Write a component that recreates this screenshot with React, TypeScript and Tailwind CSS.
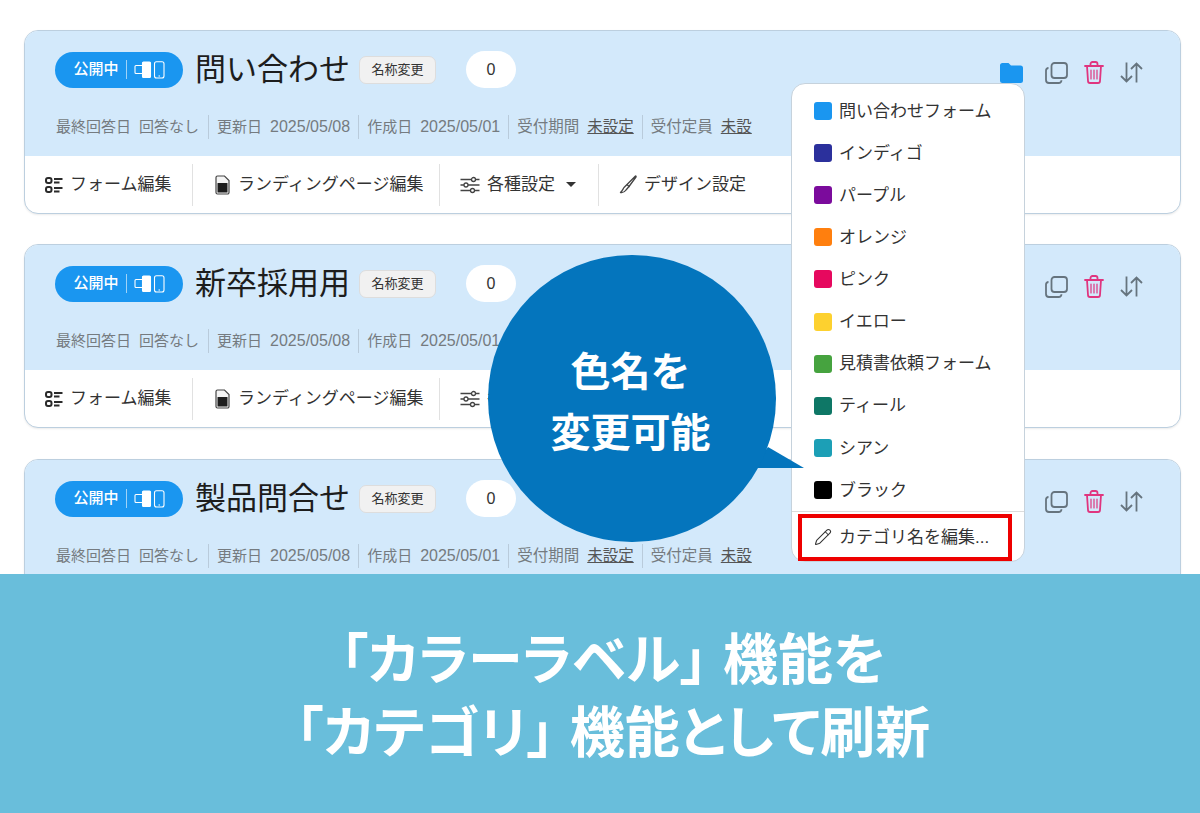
import { Pencil } from "lucide-react";

const categories = [
  { name: "問い合わせフォーム", color: "bg-[#1a96f0]" },
  { name: "インディゴ", color: "bg-[#2b309c]" },
  { name: "パープル", color: "bg-[#7b0b9c]" },
  { name: "オレンジ", color: "bg-[#ff7f0e]" },
  { name: "ピンク", color: "bg-[#e6085e]" },
  { name: "イエロー", color: "bg-[#fdd12f]" },
  { name: "見積書依頼フォーム", color: "bg-[#46a33f]" },
  { name: "ティール", color: "bg-[#0e7766]" },
  { name: "シアン", color: "bg-[#1c9fb6]" },
  { name: "ブラック", color: "bg-black" },
];

const DeviceIcon = () => (
  <svg width="31" height="18" viewBox="0 0 31 18" fill="none" stroke="currentColor" strokeWidth="1.1">
    <path d="M8 4.500H2a1 1 0 0 0-1 1v6a1 1 0 0 0 1 1h6" />
    <rect x="8.500" y="1" width="8" height="15.500" rx="1" fill="currentColor" />
    <rect x="20.500" y="0.800" width="9.500" height="16.200" rx="2" />
    <path d="M24.500 15h1.500" />
  </svg>
);

const FormIcon = () => (
  <svg width="18" height="18" viewBox="0 0 18 18" fill="none" stroke="#2b2b2b" strokeWidth="2">
    <rect x="1" y="2" width="5.500" height="5" rx="2" />
    <rect x="1" y="11" width="5.500" height="5" rx="2" />
    <path d="M9 3h8.500M9 6.500h5.500M9 12h8.500M9 15.500h5.500" />
  </svg>
);

const PageIcon = () => (
  <svg width="16" height="20" viewBox="0 0 16 20">
    <path d="M2.500 1h7l4.500 4.500V17.500a1.500 1.500 0 0 1-1.500 1.500H2.500A1.500 1.500 0 0 1 1 17.500V2.500A1.500 1.500 0 0 1 2.500 1z" fill="#f4f4f4" stroke="#444" strokeWidth="1.200" />
    <rect x="2.500" y="8" width="10" height="9.500" rx="0.500" fill="#1d1d1d" />
  </svg>
);

const SlidersIcon = () => (
  <svg width="20" height="18" viewBox="0 0 20 18" fill="none" stroke="#444" strokeWidth="1.300">
    <path d="M0.500 3.500h11M15.500 3.500h4M0.500 9h3.500M8 9h11.500M0.500 14.500h10M14.500 14.500h5" />
    <circle cx="13.500" cy="3.500" r="2" />
    <circle cx="6" cy="9" r="2" />
    <circle cx="12.500" cy="14.500" r="2" />
  </svg>
);

const BrushIcon = () => (
  <svg width="18" height="19" viewBox="0 0 18 19" fill="none" stroke="#444" strokeWidth="1.300" strokeLinejoin="round">
    <path d="M16.500 1 8 9.500 5 12.500c-1 1.500-1.500 3-3.500 5 3 .5 4.500-1 5.500-2.500l3-3.500 7-9.500c.3-.8-.2-1.200-.5-1z" />
    <path d="M8 9.500 10.500 12" />
  </svg>
);

const FolderIcon = () => (
  <svg width="23" height="20" viewBox="0 0 23 20" fill="#1a96f0">
    <path d="M2.500 0h6l2.500 2.500h9.500A2.500 2.500 0 0 1 23 5v12.500a2.500 2.500 0 0 1-2.500 2.500h-18A2.500 2.500 0 0 1 0 17.500v-15A2.500 2.500 0 0 1 2.500 0z" />
  </svg>
);

const CopyIcon = () => (
  <svg width="23" height="22" viewBox="0 0 23 22" fill="none" stroke="#66747e" strokeWidth="1.800">
    <rect x="6.500" y="1" width="15.500" height="15" rx="3" />
    <path d="M3.500 6A2.500 2.500 0 0 0 1 8.500V18a3 3 0 0 0 3 3h9.500a3 3 0 0 0 3-2.800" />
  </svg>
);

const TrashIcon = () => (
  <svg width="20" height="23" viewBox="0 0 20 23" fill="none" stroke="#e0357f" strokeWidth="1.800" strokeLinecap="round">
    <path d="M1 5h18M6.500 5V3a2 2 0 0 1 2-2h3a2 2 0 0 1 2 2v2M3 5l1 15a2 2 0 0 0 2 2h8a2 2 0 0 0 2-2l1-15" />
    <path d="M7 9v9M10 9v9M13 9v9" strokeWidth="1.200" />
  </svg>
);

const SortIcon = () => (
  <svg width="23" height="21" viewBox="0 0 23 21" fill="none" stroke="#66747e" strokeWidth="1.800">
    <path d="M6.500 0.500v19M1 14l5.500 5.500L12 14M16.500 20.500v-19M11 7l5.500-5.500L22 7" />
  </svg>
);

const Meta = ({ label, value, link, first }: { label: string; value: string; link?: boolean; first?: boolean }) => (
  <div className={first ? "flex items-center gap-[8px] pr-[9px] h-[24px]" : "flex items-center gap-[8px] px-[8px] h-[24px] border-l border-[#b9cbdb]"}>
    <span className={link ? "text-[15.500px]" : ""}>{label}</span>
    <span className={link ? "text-[15.500px] underline text-[#555]" : first ? "" : "text-[16px]"}>{value}</span>
  </div>
);

const tools = [
  { label: "フォーム編集", width: "w-[148px]", icon: <FormIcon /> },
  { label: "ランディングページ編集", width: "w-[247px] pl-[22px]", icon: <PageIcon /> },
  { label: "各種設定", width: "w-[159px] pl-[20px]", icon: <SlidersIcon />, caret: true },
  { label: "デザイン設定", width: "w-[170px] pl-[20px]", icon: <BrushIcon /> },
];

// toolCount: how many toolbar items show; the bubble and the banner cover the rest
const FormCard = ({ title, toolCount }: { title: string; toolCount: number }) => (
  <div className="shrink-0 h-[184px] last:mt-px rounded-[14px] border border-[#bccfdf] bg-white overflow-hidden shadow-[0_1px_2px_rgba(0,0,0,0.08)]">
    <div className="h-[125px] bg-[#d3e9fb] pl-[30px] pr-[37px] pt-[20px]">
      <div className="flex items-center h-[37px]">
        <div className="flex items-center justify-center gap-[7px] w-[128px] h-[36px] rounded-full bg-[#1a96f0] text-white text-[15px] font-medium">
          <span>公開中</span>
          <span className="w-px h-[19px] bg-[#9fd3f8]" />
          <DeviceIcon />
        </div>
        <h2 className="ml-[12px] text-[31px] leading-none text-[#1d1d1d]">{title}</h2>
        <button className="ml-[9px] w-[77px] h-[28px] rounded-[7px] bg-[#f1f1f1] border border-[#dddddd] text-[13px] text-[#333]">名称変更</button>
        <div className="ml-[30px] w-[50px] h-[37px] rounded-full bg-white flex items-center justify-center text-[16px] text-[#333]">0</div>
        <div className="ml-auto mt-[6px] flex items-center gap-[16px]">
          <span className="mr-[6px]"><FolderIcon /></span>
          <CopyIcon />
          <TrashIcon />
          <SortIcon />
        </div>
      </div>
      <div className="flex items-center mt-[27px] ml-[1px] text-[15px] text-[#757b80]">
        <Meta first label="最終回答日" value="回答なし" />
        <Meta label="更新日" value="2025/05/08" />
        <Meta label="作成日" value="2025/05/01" />
        <Meta label="受付期間" value="未設定" link />
        <Meta label="受付定員" value="未設" link />
      </div>
    </div>
    <div className="h-[57px] flex items-center pl-[20px] text-[17px] text-[#333]">
      {tools.slice(0, toolCount).map((t) => (
        <div key={t.label} className={`flex items-center gap-[7px] h-[42px] border-r border-[#e1e1e1] last:border-r-0 ${t.width}`}>
          {t.icon}
          <span>{t.label}</span>
          {t.caret && <span className="ml-[4px] w-0 h-0 border-x-[5px] border-x-transparent border-t-[5px] border-t-[#333]" />}
        </div>
      ))}
    </div>
  </div>
);

const CategoryMenu = () => (
  <div className="absolute left-[791px] top-[83px] w-[234px] h-[479px] rounded-[14px] bg-white border border-[#c6d2dc] pt-[6px] text-[17px] text-[#333]">
    {categories.map((c) => (
      <div key={c.name} className="flex items-center gap-[7px] h-[42.100px] pl-[22px]">
        <span className={`w-[18px] h-[18px] rounded-[3px] ${c.color}`} />
        <span className="pt-px">{c.name}</span>
      </div>
    ))}
    <div className="border-t border-[#dcdcdc]" />
    <div className="ml-[6px] mt-[2px] w-[214px] h-[47px] border-[4px] border-[#ee0000] flex items-center gap-[7px] pl-[12px]">
      <Pencil size={18} strokeWidth={1.400} />
      <span>カテゴリ名を編集...</span>
    </div>
  </div>
);

const Bubble = () => (
  <div className="absolute left-[488px] top-[255px] w-[288px] h-[287px]">
    <svg className="absolute left-[262px] top-[186px]" width="60" height="32" viewBox="0 0 60 32" fill="#0475bd">
      <path d="M18 6 54 27H2z" />
    </svg>
    <div className="absolute inset-0 pt-[8px] pr-[3px] rounded-full bg-[#0475bd] flex flex-col items-center justify-center text-white text-[40px] leading-[61px] font-bold">
      <span>色名を</span>
      <span>変更可能</span>
    </div>
  </div>
);

export default function App() {
  return (
    <div className="relative w-[1200px] h-[813px] overflow-hidden bg-white font-['Liberation_Sans','Noto_Sans_CJK_JP',sans-serif]">
      <div className="h-[574px] overflow-hidden flex flex-col gap-[30px] pt-[30px] pl-[24px] pr-[19px]">
        <FormCard title="問い合わせ" toolCount={4} />
        <FormCard title="新卒採用用" toolCount={3} />
        <FormCard title="製品問合せ" toolCount={0} />
      </div>
      <div className="h-[239px] pt-[6px] pl-[26px] bg-[#69bedb] flex flex-col items-center justify-center text-white text-[55px] leading-[73px] font-bold [font-feature-settings:'palt']">
        <span>「カラーラベル」 機能を</span>
        <span>「カテゴリ」 機能として刷新</span>
      </div>
      <CategoryMenu />
      <Bubble />
    </div>
  );
}
